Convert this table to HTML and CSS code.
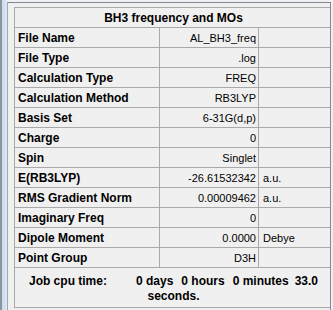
FILE: index.html
```html
<!DOCTYPE html>
<html>
<head>
<meta charset="utf-8">
<title>BH3 frequency and MOs</title>
<link rel="stylesheet" href="styles.css">
</head>
<body>
<div class="frame">
  <div class="edge"></div>
  <div class="panel">
    <table class="props">
      <colgroup>
        <col class="c-key">
        <col class="c-val">
        <col class="c-unit">
      </colgroup>
      <tr><th class="title" colspan="3">BH3 frequency and MOs</th></tr>
      <tr><td class="k">File Name</td><td class="v">AL_BH3_freq</td><td class="u"></td></tr>
      <tr><td class="k">File Type</td><td class="v">.log</td><td class="u"></td></tr>
      <tr><td class="k">Calculation Type</td><td class="v">FREQ</td><td class="u"></td></tr>
      <tr><td class="k">Calculation Method</td><td class="v">RB3LYP</td><td class="u"></td></tr>
      <tr><td class="k">Basis Set</td><td class="v">6-31G(d,p)</td><td class="u"></td></tr>
      <tr><td class="k">Charge</td><td class="v">0</td><td class="u"></td></tr>
      <tr><td class="k">Spin</td><td class="v">Singlet</td><td class="u"></td></tr>
      <tr><td class="k">E(RB3LYP)</td><td class="v">-26.61532342</td><td class="u">a.u.</td></tr>
      <tr><td class="k">RMS Gradient Norm</td><td class="v">0.00009462</td><td class="u">a.u.</td></tr>
      <tr><td class="k">Imaginary Freq</td><td class="v">0</td><td class="u"></td></tr>
      <tr><td class="k">Dipole Moment</td><td class="v">0.0000</td><td class="u">Debye</td></tr>
      <tr><td class="k">Point Group</td><td class="v">D3H</td><td class="u"></td></tr>
      <tr>
        <td class="foot" colspan="3"><span class="cpu-label">Job cpu time:</span><span class="cpu-part">0 days</span><span class="cpu-part">0 hours</span><span class="cpu-part">0 minutes</span><span class="cpu-sec">33.0</span><br>seconds.</td>
      </tr>
    </table>
  </div>
</div>
</body>
</html>
```
FILE: styles.css
```css
html, body {
  margin: 0;
  padding: 0;
  background: #f0f0f0;
}

body {
  width: 333px;
  height: 310px;
  overflow: hidden;
  font-family: "Liberation Sans", Arial, sans-serif;
  color: #000;
}

.frame {
  display: flex;
  height: 310px;
}

/* window side strip */
.edge {
  width: 5px;
  flex: none;
  border-left: 2px solid #8e949c;
  background: linear-gradient(to right, #c9dcf2, #dbe8f7);
}

.panel {
  flex: none;
  width: 324px;
  margin-top: 2px;
  padding: 4px 0 0 6px;
  background: #f0f0f0;
  border-top: 1px solid #7d8898;
  border-left: 1px solid #a7a7a7;
  border-right: 1px solid #7d8898;
  box-sizing: border-box;
  overflow: hidden;
}

.props {
  border-collapse: collapse;
  table-layout: fixed;
  width: 318px;
  background: #f0f0f0;
}

.c-key { width: 145px; }
.c-val { width: 99px; }
.c-unit { width: 74px; }

.props th,
.props td {
  border: 1px solid #a9a9a9;
  height: 19px;
  padding: 0;
  white-space: nowrap;
  overflow: hidden;
  line-height: 14px;
}

.title {
  font-weight: bold;
  font-size: 12px;
  text-align: center;
}

.k {
  font-weight: bold;
  font-size: 12px;
  padding-left: 3px !important;
  text-align: left;
}

.v {
  font-size: 11px;
  text-align: right;
  padding-right: 2px !important;
}

.u {
  font-size: 11px;
  padding-left: 4px !important;
}

.props td.foot {
  height: 40px;
  box-sizing: border-box;
  padding: 3px 0 0;
  font-weight: bold;
  font-size: 12px;
  line-height: 15px;
  text-align: center;
  vertical-align: middle;
}

.cpu-label { margin-right: 29px; }
.cpu-part + .cpu-part { margin-left: 8px; }
.cpu-sec { margin-left: 6px; }
```
